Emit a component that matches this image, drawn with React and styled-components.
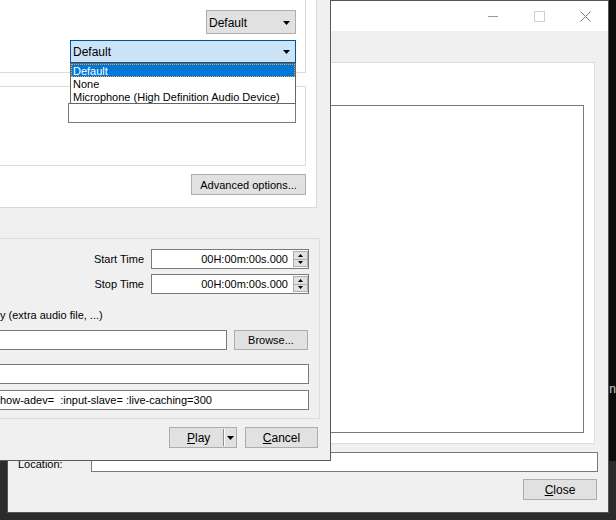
import React from 'react';
import styled, { createGlobalStyle } from 'styled-components';

const GlobalStyle = createGlobalStyle`
	html, body { margin: 0; padding: 0; background: #2b2b2b; }
	* { box-sizing: border-box; }
`;

const ui = `"Liberation Sans", Arial, sans-serif`;

const Desktop = styled.div`
	position: relative;
	width: 616px;
	height: 520px;
	overflow: hidden;
	background: #2b2b2b;
	font-family: ${ui};
	font-size: 11px;
	color: #000;
`;

/* terminal peeking out on the right */
const Terminal = styled.div`
	position: absolute;
	left: 609px;
	top: 0;
	width: 40px;
	height: 461px;
	background: #0c0c0c;
	color: #c8c8c8;
	font-family: "Liberation Mono", monospace;
	font-size: 12px;
	line-height: 14px;
	padding-top: 383px;
`;

/* ---------- back window ---------- */
const BackWindow = styled.div`
	position: absolute;
	left: 7px;
	top: 0;
	width: 602px;
	height: 513px;
	border: 1px solid #555;
	background: #f0f0f0;
	display: flex;
	flex-direction: column;
`;

const TitleBar = styled.div`
	height: 30px;
	background: #fff;
	display: flex;
	justify-content: flex-end;
`;

const CaptionButton = styled.div`
	width: 46px;
	height: 30px;
	display: flex;
	align-items: center;
	justify-content: center;
`;

const Panel = styled.div`
	margin: 31px 13px 0 10px;
	height: 382px;
	background: #fff;
	border: 1px solid #dcdcdc;
	padding: 42px 10px 10px 10px;
	display: flex;
`;

const InnerBox = styled.div`
	flex: 1;
	border: 1px solid #7a7a7a;
	background: #fff;
`;

const LocationRow = styled.div`
	margin: 8px 10px 0 0;
	height: 20px;
	display: flex;
	align-items: center;
`;

const LocationLabel = styled.div`
	width: 83px;
	padding-left: 10px;
	padding-top: 3px;
`;

const Field = styled.div`
	flex: ${p => (p.$grow ? 1 : 'none')};
	width: ${p => (p.$width ? `${p.$width}px` : 'auto')};
	height: 20px;
	margin-top: ${p => p.$top || 0}px;
	border: 1px solid #7a7a7a;
	background: #fff;
	padding-left: ${p => p.$pad || 2}px;
	line-height: 18px;
	white-space: nowrap;
	overflow: hidden;
`;

const BackButtons = styled.div`
	margin: 7px 11px 0 0;
	display: flex;
	justify-content: flex-end;
`;

const Button = styled.div`
	width: ${p => p.$width}px;
	height: ${p => p.$height || 21}px;
	margin-top: ${p => p.$top || 0}px;
	align-self: ${p => p.$align || 'auto'};
	background: #e1e1e1;
	border: 1px solid #adadad;
	display: flex;
	align-items: center;
	justify-content: center;
	white-space: nowrap;
	u { text-decoration: underline; text-underline-offset: 1px; }
`;

const CloseButton = styled(Button)`
	font-size: 12px;
`;

/* ---------- open media dialog ---------- */
const Dialog = styled.div`
	position: absolute;
	left: -20px;
	top: -30px;
	width: 351px;
	height: 491px;
	background: #f0f0f0;
	border: 1px solid #5a5a5a;
	display: flex;
	flex-direction: column;
	z-index: 2;
`;

const TabPanel = styled.div`
	margin: 9px 13px 0 5px;
	height: 228px;
	background: #fff;
	border: 1px solid #d9d9d9;
	padding: 9px 10px 0 5px;
	display: flex;
	flex-direction: column;
`;

const Group = styled.div`
	height: ${p => p.$height}px;
	margin-top: ${p => p.$top || 0}px;
	border: 1px solid #dcdcdc;
	display: flex;
	flex-direction: column;
	align-items: flex-end;
	padding-right: 9px;
`;

const Combo = styled.div`
	position: relative;
	width: ${p => p.$width}px;
	height: ${p => p.$height}px;
	margin-top: ${p => p.$top}px;
	background: ${p => (p.$focused ? '#cce4f7' : '#e1e1e1')};
	border: 1px solid ${p => (p.$focused ? '#005499' : '#adadad')};
	display: flex;
	align-items: center;
	justify-content: space-between;
	padding: 1px 5px 0 2px;
	font-size: 12px;
`;

const DropList = styled.div`
	position: absolute;
	left: -1px;
	top: ${p => p.$top}px;
	width: 226px;
	height: 41px;
	background: #fff;
	border: 1px solid #646464;
	z-index: 3;
	font-size: 11px;
`;

const DropItem = styled.div`
	height: 13px;
	line-height: 12px;
	padding: 1px 0 0 2px;
	white-space: nowrap;
	background: ${p => (p.$active ? '#0078d7' : 'transparent')};
	color: ${p => (p.$active ? '#fff' : '#000')};
	outline: ${p => (p.$active ? '1px dotted #f0a040' : 'none')};
	outline-offset: -1px;
`;

const BottomGroup = styled.div`
	margin: 30px 10px 0 9px;
	height: 181px;
	border: 1px solid #dcdcdc;
	padding: 10px 10px 0 0;
	display: flex;
	flex-direction: column;
`;

const TimeRow = styled.div`
	height: 20px;
	margin-top: ${p => p.$top || 0}px;
	display: flex;
	justify-content: flex-end;
	align-items: center;
	gap: 7px;
`;

const Spin = styled.div`
	width: 158px;
	height: 20px;
	border: 1px solid #7a7a7a;
	background: #fff;
	display: flex;
	align-items: center;
	justify-content: flex-end;
`;

const SpinText = styled.span`
	margin-right: 5px;
`;

const SpinButtons = styled.div`
	width: 15px;
	height: 16px;
	border: 1px solid #adadad;
	background: #e1e1e1;
	display: flex;
	flex-direction: column;
`;

const SpinHalf = styled.div`
	flex: 1;
	display: flex;
	align-items: center;
	justify-content: center;
	border-top: ${p => (p.$lower ? '1px solid #adadad' : 'none')};
`;

const NoteLabel = styled.div`
	margin-top: 10px;
	height: 20px;
	line-height: 22px;
	padding-left: 9px;
	white-space: nowrap;
`;

const BrowseRow = styled.div`
	margin-top: 6px;
	display: flex;
	gap: 7px;
`;

const DialogButtons = styled.div`
	margin: 8px 12px 0 0;
	display: flex;
	justify-content: flex-end;
	gap: 8px;
	font-size: 12px;
`;

const SplitButton = styled(Button)`
	justify-content: flex-start;
	padding-left: 17px;
`;

const SplitArrow = styled.div`
	margin-left: auto;
	width: 13px;
	height: 17px;
	border-left: 1px solid #8f8f8f;
	box-shadow: inset 1px 0 0 #fff;
	display: flex;
	align-items: center;
	justify-content: center;
`;

const Caret = () => (
	<svg width="7" height="4" viewBox="0 0 7 4"><polygon points="0,0 7,0 3.5,4" fill="#000" /></svg>
);

const Tri = ({ up }) => (
	<svg width="5" height="3" viewBox="0 0 5 3">
		<polygon points={up ? '0,3 5,3 2.5,0' : '0,0 5,0 2.5,3'} fill="#000" />
	</svg>
);

function TimeSpin({ label, top }) {
	return (
		<TimeRow $top={top}>
			<span>{label}</span>
			<Spin>
				<SpinText>00H:00m:00s.000</SpinText>
				<SpinButtons>
					<SpinHalf><Tri up /></SpinHalf>
					<SpinHalf $lower><Tri /></SpinHalf>
				</SpinButtons>
			</Spin>
		</TimeRow>
	);
}

export default function App() {
	return (
		<>
			<GlobalStyle />
			<Desktop>
				<Terminal>n</Terminal>

				<BackWindow>
					<TitleBar>
						<CaptionButton>
							<svg width="10" height="1"><rect width="10" height="1" fill="#9a9a9a" /></svg>
						</CaptionButton>
						<CaptionButton>
							<svg width="11" height="11"><rect x="0.5" y="0.5" width="10" height="10" fill="none" stroke="#d0d0d0" /></svg>
						</CaptionButton>
						<CaptionButton>
							<svg width="11" height="11"><path d="M0.5 0.5 L10.5 10.5 M10.5 0.5 L0.5 10.5" stroke="#7a7a7a" /></svg>
						</CaptionButton>
					</TitleBar>
					<Panel>
						<InnerBox />
					</Panel>
					<LocationRow>
						<LocationLabel>Location:</LocationLabel>
						<Field $grow />
					</LocationRow>
					<BackButtons>
						<CloseButton $width={74}><span><u>C</u>lose</span></CloseButton>
					</BackButtons>
				</BackWindow>

				<Dialog>
					<TabPanel>
						<Group $height={83}>
							<Combo $width={90} $height={24} $top={19}>
								<span>Default</span>
								<Caret />
							</Combo>
							<Combo $width={226} $height={23} $top={6} $focused>
								<span>Default</span>
								<Caret />
								<DropList $top={22}>
									<DropItem $active>Default</DropItem>
									<DropItem>None</DropItem>
									<DropItem>Microphone (High Definition Audio Device)</DropItem>
								</DropList>
							</Combo>
						</Group>
						<Group $height={80} $top={13}>
							<Field $width={228} $top={16} />
						</Group>
						<Button $width={115} $top={8} $align="flex-end">Advanced options...</Button>
					</TabPanel>

					<BottomGroup>
						<TimeSpin label="Start Time" />
						<TimeSpin label="Stop Time" top={5} />
						<NoteLabel>y (extra audio file, ...)</NoteLabel>
						<BrowseRow>
							<Field $grow />
							<Button $width={74} $height={20} style={{ marginRight: 1 }}>Browse...</Button>
						</BrowseRow>
						<Field $top={14} />
						<Field $top={6} $pad={8}>how-adev=&nbsp; :input-slave= :live-caching=300</Field>
					</BottomGroup>

					<DialogButtons>
						<SplitButton $width={68}>
							<span><u>P</u>lay</span>
							<SplitArrow><Caret /></SplitArrow>
						</SplitButton>
						<Button $width={73}><span><u>C</u>ancel</span></Button>
					</DialogButtons>
				</Dialog>
			</Desktop>
		</>
	);
}
